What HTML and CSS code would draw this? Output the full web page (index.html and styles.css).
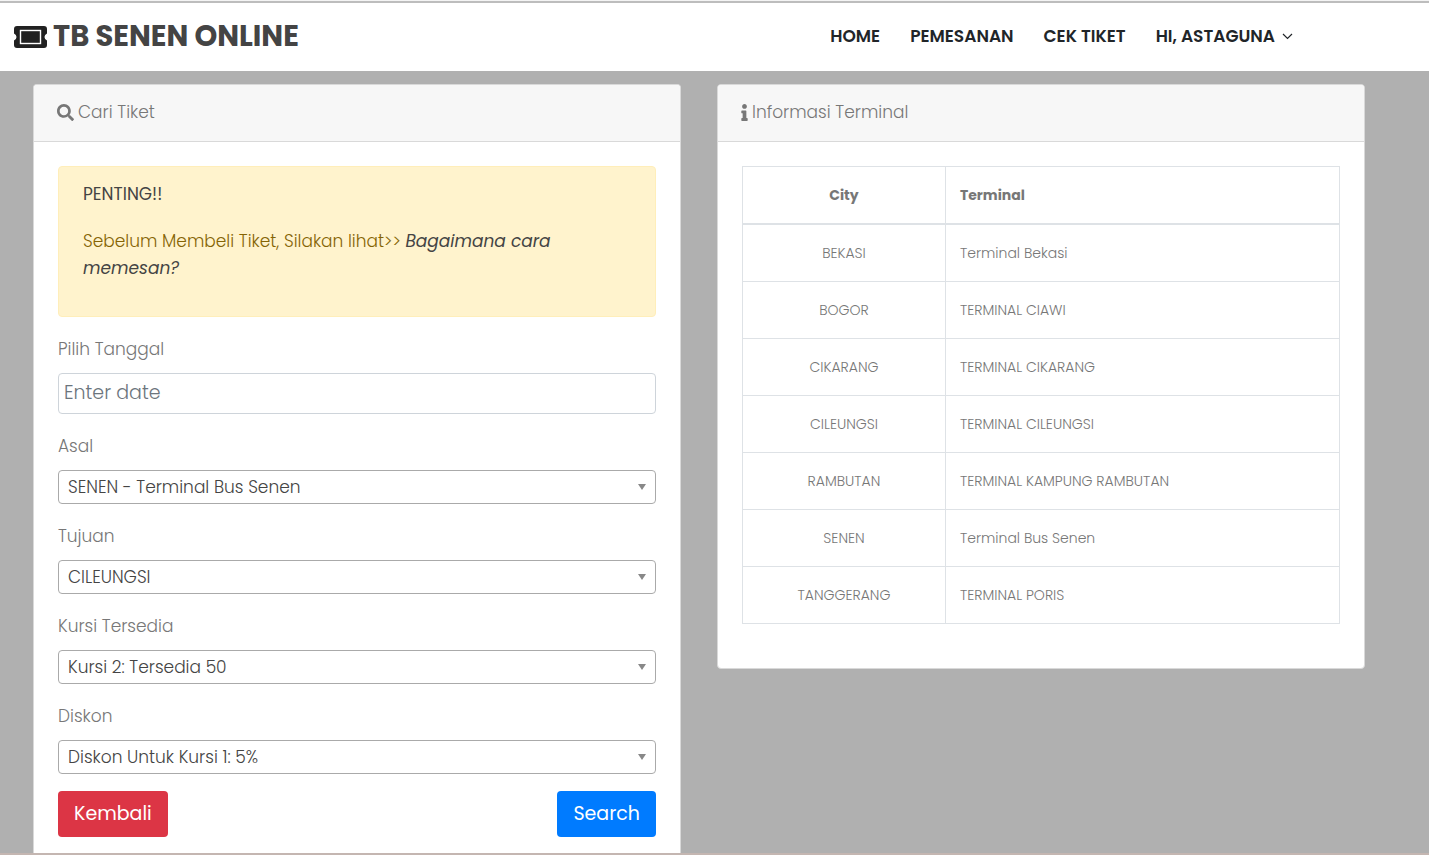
FILE: index.html
```html
<!DOCTYPE html>
<html lang="id">
<head>
<meta charset="utf-8">
<meta name="viewport" content="width=device-width, initial-scale=1">
<title>TB Senen Online</title>
<link rel="stylesheet" href="styles.css">
</head>
<body>
<header class="topbar">
  <a class="brand" href="#">
    <svg class="brand-icon" viewBox="0 0 33 22" aria-hidden="true">
      <path fill="#212121" d="M3 0h27a3 3 0 0 1 3 3v4.500q-2.500 1-2.500 3.500t2.500 3.500V19a3 3 0 0 1-3 3H3a3 3 0 0 1-3-3v-4.500q2.500-1 2.500-3.500T0 7.500V3a3 3 0 0 1 3-3z"/>
      <rect x="6.500" y="4.500" width="20" height="13" fill="none" stroke="#fff" stroke-width="1.400"/>
    </svg>
    <span>TB SENEN ONLINE</span>
  </a>
  <nav class="menu">
    <a href="#">HOME</a>
    <a href="#">PEMESANAN</a>
    <a href="#">CEK TIKET</a>
    <a class="account" href="#">HI, ASTAGUNA
      <svg class="chevron" viewBox="0 0 11 7" aria-hidden="true"><path d="M1 1l4.500 4.500L10 1" fill="none" stroke="#212529" stroke-width="1.200"/></svg>
    </a>
  </nav>
</header>
<main class="content">
  <section class="card card-search">
    <h2 class="card-title">
      <svg class="icon-search" viewBox="0 0 512 512" aria-hidden="true"><path d="M505 442.700L405.300 343c-4.500-4.500-10.600-7-17-7H372c27.600-35.300 44-79.700 44-128C416 93.100 322.900 0 208 0S0 93.100 0 208s93.100 208 208 208c48.300 0 92.700-16.400 128-44v16.300c0 6.400 2.500 12.500 7 17l99.700 99.700c9.400 9.400 24.600 9.400 33.900 0l28.300-28.300c9.400-9.400 9.400-24.600.1-34zM208 336c-70.700 0-128-57.200-128-128 0-70.700 57.200-128 128-128 70.700 0 128 57.200 128 128 0 70.700-57.200 128-128 128z"/></svg>
      <span>Cari Tiket</span>
    </h2>
    <form class="card-body">
      <div class="notice">
        <p class="notice-title">PENTING!!</p>
        <p>Sebelum Membeli Tiket, Silakan lihat&gt;&gt; <a href="#">Bagaimana cara memesan?</a></p>
      </div>
      <div class="field">
        <label for="tanggal">Pilih Tanggal</label>
        <input id="tanggal" class="date" type="text" placeholder="Enter date">
      </div>
      <div class="field">
        <label for="asal">Asal</label>
        <div class="select"><select id="asal"><option>SENEN - Terminal Bus Senen</option></select></div>
      </div>
      <div class="field">
        <label for="tujuan">Tujuan</label>
        <div class="select"><select id="tujuan"><option>CILEUNGSI</option></select></div>
      </div>
      <div class="field">
        <label for="kursi">Kursi Tersedia</label>
        <div class="select"><select id="kursi"><option>Kursi 2: Tersedia 50</option></select></div>
      </div>
      <div class="field">
        <label for="diskon">Diskon</label>
        <div class="select"><select id="diskon"><option>Diskon Untuk Kursi 1: 5%</option></select></div>
      </div>
      <div class="actions">
        <button class="btn btn-back" type="button">Kembali</button>
        <button class="btn btn-search" type="submit">Search</button>
      </div>
    </form>
  </section>
  <section class="card card-info">
    <h2 class="card-title">
      <svg class="icon-info" viewBox="0 0 192 512" aria-hidden="true"><path d="M20 424.200h20V279.800H20c-11 0-20-9-20-20V212c0-11 9-20 20-20h112c11 0 20 9 20 20v212.200h20c11 0 20 9 20 20V492c0 11-9 20-20 20H20c-11 0-20-9-20-20v-47.800c0-11 9-20 20-20zM96 0C56.200 0 24 32.200 24 72s32.200 72 72 72 72-32.200 72-72S135.800 0 96 0z"/></svg>
      <span>Informasi Terminal</span>
    </h2>
    <div class="card-body">
      <table class="terminals">
        <thead><tr><th>City</th><th>Terminal</th></tr></thead>
        <tbody>
          <tr><td>BEKASI</td><td>Terminal Bekasi</td></tr>
          <tr><td>BOGOR</td><td>TERMINAL CIAWI</td></tr>
          <tr><td>CIKARANG</td><td>TERMINAL CIKARANG</td></tr>
          <tr><td>CILEUNGSI</td><td>TERMINAL CILEUNGSI</td></tr>
          <tr><td>RAMBUTAN</td><td>TERMINAL KAMPUNG RAMBUTAN</td></tr>
          <tr><td>SENEN</td><td>Terminal Bus Senen</td></tr>
          <tr><td>TANGGERANG</td><td>TERMINAL PORIS</td></tr>
        </tbody>
      </table>
    </div>
  </section>
</main>
</body>
</html>
```
FILE: styles.css
```css
* { box-sizing: border-box; }

body {
  margin: 0;
  min-height: 100vh;
  display: flex;
  flex-direction: column;
  background: #b0b0b0;
  color: #777;
  font-family: Poppins, Inter, "Open Sans", sans-serif;
  font-size: 17px;
  font-weight: 300;
  line-height: 27px;
}

a { color: inherit; text-decoration: none; }
p { margin: 0; }

.topbar {
  display: flex;
  align-items: center;
  justify-content: space-between;
  margin-top: 1px;
  padding: 13px 136px 14px 14px;
  border-top: 2px solid #bdbdbd;
  background: #fff;
  box-shadow: 0 -1px #f4f4f4;
}

.brand {
  display: flex;
  align-items: center;
  gap: 6px;
  color: #444;
  font-size: 29px;
  font-weight: 700;
  line-height: 41px;
}

.brand-icon { width: 33px; height: 22px; }

.menu {
  display: flex;
  gap: 30px;
  color: #212529;
  font-weight: 600;
}

.account { display: flex; align-items: center; gap: 7px; }
.chevron { width: 11px; height: 7px; }

.content {
  flex: 1;
  display: grid;
  grid-template-columns: 1fr 1fr;
  gap: 36px;
  padding: 13px 64px 0 33px;
  border-bottom: 2px solid #c4b6b1;
}

.card {
  border: 1px solid #d9d9d9;
  border-radius: 4px;
  background: #fff;
  overflow: hidden;
}

.card-search {
  border-bottom: 0;
  border-radius: 4px 4px 0 0;
}

.card-info { align-self: start; }

.card-title {
  display: flex;
  align-items: center;
  gap: 4px;
  margin: 0;
  padding: 14px 23px 15px;
  border-bottom: 1px solid #d9d9d9;
  background: #f7f7f7;
  font-size: 17px;
  font-weight: 300;
}

.card-title svg { fill: #777; height: 17px; }
.icon-search { width: 17px; }
.icon-info { width: 7px; }

.card-body { padding: 24px 24px 14px; }
.card-info .card-body { padding-bottom: 44px; }

.notice {
  padding: 14px 24px 34px;
  border: 1px solid #ffeeba;
  border-radius: 4px;
  background: #fff3cd;
  color: #856404;
}

.notice-title {
  margin-bottom: 20px;
  color: #444;
  font-weight: 400;
}

.notice a { color: #444; font-style: italic; font-weight: 400; }

.field {
  display: grid;
  gap: 10px;
  margin-top: 19px;
}

.date {
  width: 100%;
  height: 41px;
  padding: 0 5px 2px;
  border: 1px solid #ced4da;
  border-radius: 4px;
  background: #fff;
  color: #444;
  font: inherit;
  font-size: 19px;
}

.date::placeholder { color: #6c757d; opacity: 1; }

.select { position: relative; }

.select::after {
  content: "";
  position: absolute;
  top: 14px;
  right: 10px;
  border: 4px solid transparent;
  border-top: 6px solid #888;
  border-bottom: 0;
  pointer-events: none;
}

.select select {
  display: block;
  width: 100%;
  height: 34px;
  padding: 0 24px 0 9px;
  border: 1px solid #aaa;
  border-radius: 4px;
  background: #fff;
  color: #444;
  font: inherit;
  appearance: none;
}

.actions {
  display: flex;
  justify-content: space-between;
  margin-top: 17px;
}

.btn {
  height: 46px;
  padding: 0 16px 2px;
  border: 0;
  border-radius: 4px;
  color: #fff;
  font: inherit;
  font-size: 19px;
  font-weight: 400;
}

.btn-back { background: #dc3545; }
.btn-search { background: #007bff; }

.terminals {
  width: 100%;
  border-collapse: collapse;
  font-size: 14px;
  line-height: 28px;
}

.terminals th,
.terminals td {
  padding: 14px;
  border: 1px solid #dee2e6;
  text-align: left;
}

.terminals th { border-bottom-width: 2px; font-weight: 700; }

.terminals th:first-child,
.terminals td:first-child { width: 34%; text-align: center; }
```
